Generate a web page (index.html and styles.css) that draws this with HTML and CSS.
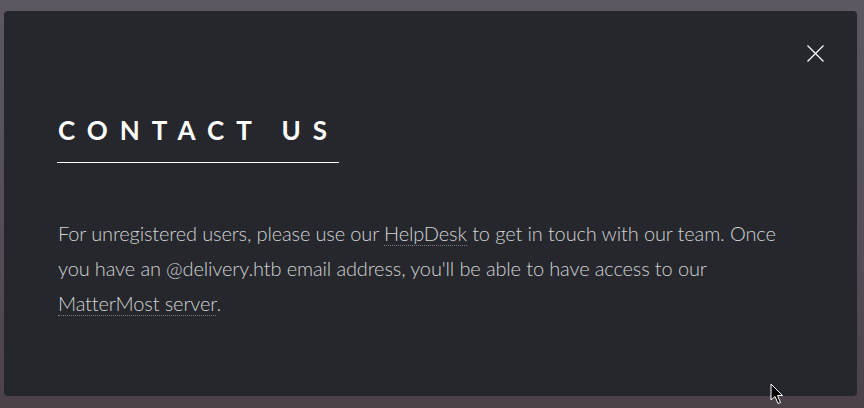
FILE: index.html
```html
<!DOCTYPE html>
<html>
<head>
<meta charset="utf-8">
<link rel="stylesheet" href="styles.css">
</head>
<body>
<div class="modal">
  <button class="close" aria-label="Close">
    <svg width="17" height="17" viewBox="0 0 17 17"><path d="M0.5 0.5L16.5 16.5M16.5 0.5L0.5 16.5" stroke="#fff" stroke-width="1.2" fill="none"/></svg>
  </button>
  <h2 class="title">Contact Us</h2>
  <p class="text">For unregistered users, please use our <a href="#">HelpDesk</a> to get in touch with our team. Once you have an @delivery.htb email address, you'll be able to have access to our <a href="#">MatterMost server</a>.</p>
  <svg class="cursor" width="14" height="22" viewBox="0 0 14 22"><path d="M1 1L1 17L5 13.5L8 20.5L10.5 19.5L7.5 12.5L12.5 12.5Z" fill="#000" stroke="#fff" stroke-width="1"/></svg>
</div>
</body>
</html>
```
FILE: styles.css
```css
html, body { margin: 0; padding: 0; }
body {
  width: 864px;
  height: 408px;
  background: linear-gradient(180deg, #5c5761 0%, #544d57 60%, #4b4149 100%);
  font-family: "Lato", sans-serif;
  overflow: hidden;
}
.modal {
  position: relative;
  box-sizing: border-box;
  margin: 11px 7px 0 4px;
  height: 385px;
  background: #25272c;
  border-radius: 4px;
  padding: 106px 69px 0 53px;
}
.close {
  position: absolute;
  top: 34px;
  right: 33px;
  background: none;
  border: 0;
  padding: 0;
  width: 17px;
  height: 17px;
}
.close svg { display: block; }
.title {
  display: inline-block;
  margin: 0;
  font-size: 26px;
  font-weight: 700;
  letter-spacing: 12px;
  text-transform: uppercase;
  color: #fff;
  line-height: 1;
  padding: 0 0 19px 1px;
  border-bottom: 1px solid #fff;
}
.text {
  margin: 53px 0 0 1px;
  color: #d2d3d5;
  font-size: 20px;
  font-weight: 300;
  letter-spacing: -0.13px;
  line-height: 35px;
}
.text a {
  color: inherit;
  text-decoration: none;
  border-bottom: 1px dotted #7a7b7f;
}
.cursor {
  position: absolute;
  left: 766px;
  top: 372px;
}
```
